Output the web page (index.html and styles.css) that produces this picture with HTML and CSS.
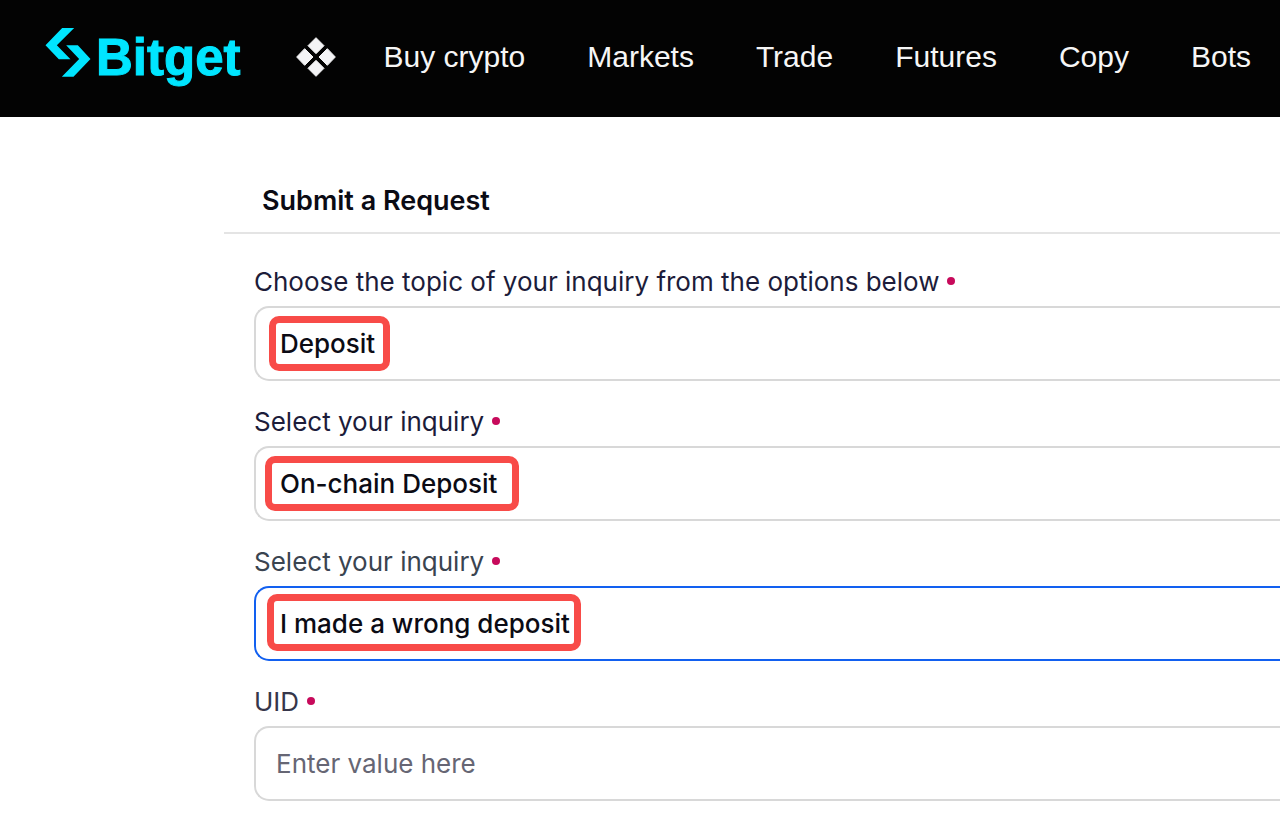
FILE: index.html
```html
<!DOCTYPE html>
<html lang="en">
<head>
  <meta charset="UTF-8">
  <meta name="viewport" content="width=device-width, initial-scale=1">
  <title>Submit a Request | Bitget</title>
  <link rel="stylesheet" href="styles.css">
</head>
<body>

  <header class="topbar">
    <a class="logo" href="#">
      <svg class="logo-mark" viewBox="45 54 137 147" aria-hidden="true">
        <path d="M96 54H132L80 106L121 148H86L46 106Z"/>
        <path d="M108 106H143L181 147L130 200H95L147 147Z"/>
      </svg>
      <span>Bitget</span>
    </a>
    <button class="apps" type="button" aria-label="Products">
      <svg viewBox="0 0 120 120" aria-hidden="true">
        <path d="M60 2L84 26L60 50L36 26Z"/>
        <path d="M26 35L51 60L26 85L2 60Z"/>
        <path d="M94 35L118 60L94 85L69 60Z"/>
        <path d="M60 70L84 94L60 118L36 94Z"/>
      </svg>
    </button>
    <nav class="menu">
      <a href="#">Buy crypto</a>
      <a href="#">Markets</a>
      <a href="#">Trade</a>
      <a href="#">Futures</a>
      <a href="#">Copy</a>
      <a href="#">Bots</a>
    </nav>
  </header>

  <main class="request">
    <h1>Submit a Request</h1>

    <form>
      <div class="field">
        <label class="required" for="topic">Choose the topic of your inquiry from the options below</label>
        <div class="control">
          <select id="topic">
            <option>Deposit</option>
          </select>
          <span class="mark mark-topic"></span>
        </div>
      </div>

      <div class="field">
        <label class="required" for="inquiry">Select your inquiry</label>
        <div class="control">
          <select id="inquiry">
            <option>On-chain Deposit</option>
          </select>
          <span class="mark mark-inquiry"></span>
        </div>
      </div>

      <div class="field active">
        <label class="required" for="detail">Select your inquiry</label>
        <div class="control">
          <select id="detail">
            <option>I made a wrong deposit</option>
          </select>
          <span class="mark mark-detail"></span>
        </div>
      </div>

      <div class="field uid">
        <label class="required" for="uid">UID</label>
        <div class="control">
          <input type="text" id="uid" placeholder="Enter value here">
        </div>
      </div>
    </form>
  </main>

</body>
</html>
```
FILE: styles.css
```css
:root {
  --cyan: #00e5ff;
  --text: #0b0b14;
  --label: #1c1c3a;
  --border: #d8d8d8;
  --blue: #1260f0;
  --red: #f84b48;
  --required: #c70a5b;
}

* {
  box-sizing: border-box;
}

body {
  margin: 0;
  background: #fff;
  color: var(--text);
  font-family: Inter, sans-serif;
  font-size: 26px;
  line-height: 32px;
}

/* header */
.topbar {
  display: flex;
  align-items: center;
  height: 117px;
  padding: 0 0 4px 45px;
  background: #030303;
  overflow: hidden;
}

.logo {
  display: flex;
  align-items: center;
  gap: 5px;
  color: var(--cyan);
  font-family: "Liberation Sans", Arial, sans-serif;
  font-size: 51px;
  font-weight: bold;
  line-height: 64px;
  text-decoration: none;
  -webkit-text-stroke: 1px var(--cyan);
}

.logo span {
  padding-top: 3px;
}

.logo-mark {
  width: 46px;
  height: 49px;
  margin-bottom: 8px;
  fill: currentColor;
}

.apps {
  flex: none;
  width: 40px;
  height: 40px;
  margin-left: 56px;
  padding: 0;
  border: 0;
  background: none;
}

.apps svg {
  display: block;
  fill: #f4f4f6;
  stroke: #f4f4f6;
  stroke-width: 3;
  stroke-linejoin: round;
}

.menu {
  display: flex;
  gap: 62px;
  margin-left: 47px;
}

.menu a {
  color: #f6f6f6;
  font-family: "Liberation Sans", Arial, sans-serif;
  font-size: 30px;
  text-decoration: none;
  white-space: nowrap;
}

/* request form */
.request {
  margin-left: 224px;
  padding-top: 68px;
}

h1 {
  margin: 0;
  padding: 0 38px 15px;
  border-bottom: 2px solid #e4e4e4;
  font-size: 27px;
  font-weight: 600;
  line-height: 32px;
}

form {
  padding: 32px 0 0 30px;
}

.field {
  margin-bottom: 25px;
}

.field label {
  display: block;
  margin-bottom: 8px;
  color: var(--label);
}

.field.active label {
  color: #3a4450;
}

.field.uid label {
  color: #36364a;
}

.required::after {
  content: "";
  display: inline-block;
  width: 8px;
  height: 8px;
  margin-left: 8px;
  border-radius: 50%;
  background: var(--required);
  vertical-align: 6px;
}

.control {
  position: relative;
}

/* the controls run out to the right edge of the window */
select,
input {
  appearance: none;
  display: block;
  width: 100%;
  height: 75px;
  padding: 0 24px;
  border: 2px solid var(--border);
  border-right: 0;
  border-radius: 15px 0 0 15px;
  outline: none;
  background: #fff;
  color: var(--text);
  font: inherit;
  font-weight: 500;
}

input {
  padding: 0 20px;
  font-weight: 400;
}

input::placeholder {
  color: #666674;
}

.active select {
  border-color: var(--blue);
}

/* highlight frames over the chosen values */
.mark {
  position: absolute;
  border: 7px solid var(--red);
  border-radius: 10px;
  pointer-events: none;
}

.mark-topic {
  top: 10px;
  left: 15px;
  width: 121px;
  height: 55px;
}

.mark-inquiry {
  top: 10px;
  left: 11px;
  width: 254px;
  height: 55px;
}

.mark-detail {
  top: 8px;
  left: 13px;
  width: 314px;
  height: 57px;
}
```
